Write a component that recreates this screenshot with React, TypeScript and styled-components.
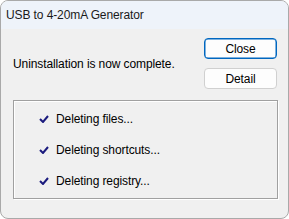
import React from "react";
import styled, { createGlobalStyle } from "styled-components";

const Global = createGlobalStyle`
  html, body { margin: 0; padding: 0; background: #ffffff; }
  * { box-sizing: border-box; }
`;

const Window = styled.div`
  width: 289px;
  height: 219px;
  border: 1px solid #a9a9a9;
  border-radius: 8px;
  overflow: hidden;
  background: #f0f0f0;
  display: flex;
  flex-direction: column;
  font-family: "Liberation Sans", Arial, sans-serif;
  font-size: 12px;
  letter-spacing: -0.1px;
  color: #000;
`;

const TitleBar = styled.div`
  height: 28px;
  background: #eef3fa;
  display: flex;
  align-items: center;
  padding-left: 5px;
  font-size: 12px;
  color: #1a1a1a;
`;

const Body = styled.div`
  flex: 1;
  display: flex;
  flex-direction: column;
  padding: 9px 11px 0 11px;
`;

const TopRow = styled.div`
  display: flex;
  align-items: center;
  justify-content: space-between;
`;

const Message = styled.div`
  padding-left: 1px;
  line-height: 16px;
`;

const Buttons = styled.div`
  display: flex;
  flex-direction: column;
  gap: 9px;
`;

const Button = styled.button<{ $primary?: boolean }>`
  width: 73px;
  height: 21px;
  border-radius: 4px;
  border: 1px solid ${(p) => (p.$primary ? "#0067c0" : "#d0d0d0")};
  box-shadow: ${(p) => (p.$primary ? "inset 0 0 0 0.5px #0067c0" : "none")};
  background: #fdfdfd;
  font-family: inherit;
  font-size: 12px;
  letter-spacing: inherit;
  color: #000;
  padding: 0;
  line-height: 16px;
`;

const Group = styled.div`
  margin-top: 11px;
  margin-left: 1px;
  width: 265px;
  height: 99px;
  border: 1px solid #a0a0a0;
  box-shadow: 1px 1px 0 #ffffff, inset 1px 1px 0 #ffffff;
  display: flex;
  flex-direction: column;
  gap: 15px;
  padding: 10px 0 0 25px;
`;

const Item = styled.div`
  display: flex;
  align-items: center;
  height: 16px;
  line-height: 16px;
`;

const Check = styled.svg`
  width: 10px;
  height: 8px;
  margin-right: 7px;
  flex: none;
`;

const CheckMark = () => (
  <Check viewBox="0 0 10 8">
    <path d="M1 4 L4 7 L9 1" fill="none" stroke="#1b1b7e" strokeWidth="2" />
  </Check>
);

const items = ["Deleting files...", "Deleting shortcuts...", "Deleting registry..."];

export default function App() {
  return (
    <>
      <Global />
      <Window>
        <TitleBar>USB to 4-20mA Generator</TitleBar>
        <Body>
          <TopRow>
            <Message>Uninstallation is now complete.</Message>
            <Buttons>
              <Button $primary>Close</Button>
              <Button>Detail</Button>
            </Buttons>
          </TopRow>
          <Group>
            {items.map((t) => (
              <Item key={t}>
                <CheckMark />
                {t}
              </Item>
            ))}
          </Group>
        </Body>
      </Window>
    </>
  );
}
